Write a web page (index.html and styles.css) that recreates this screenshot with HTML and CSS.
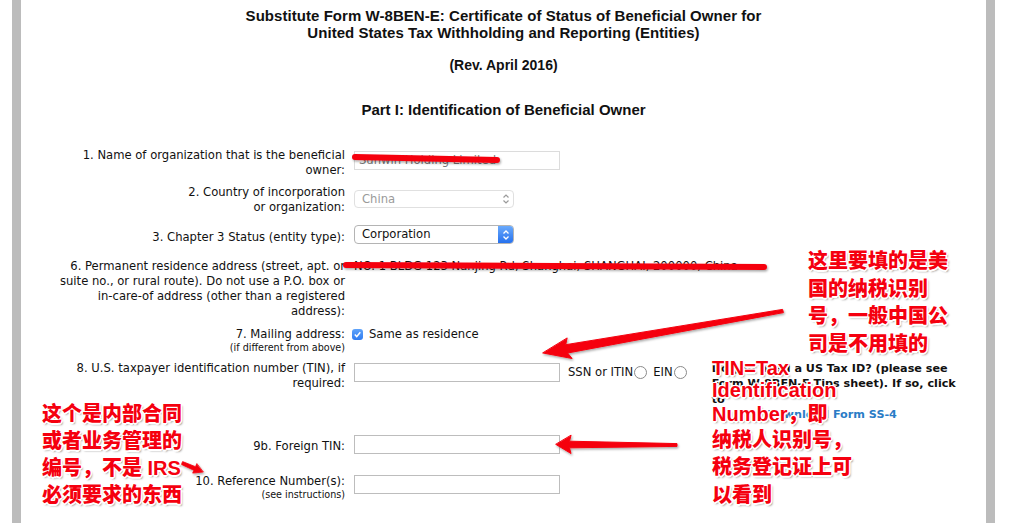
FILE: index.html
```html
<!DOCTYPE html>
<html lang="en">
<head>
<meta charset="utf-8">
<title>Substitute Form W-8BEN-E</title>
<link rel="stylesheet" href="styles.css">
</head>
<body>
<div class="page">
  <header class="form-head">
    <h1 class="title">Substitute Form W-8BEN-E: Certificate of Status of Beneficial Owner for<br>United States Tax Withholding and Reporting (Entities)</h1>
    <p class="rev">(Rev. April 2016)</p>
    <h2 class="part">Part I: Identification of Beneficial Owner</h2>
  </header>

  <div class="form">
    <div class="row r1">
      <div class="label">1. Name of organization that is the beneficial<br>owner:</div>
      <div class="field"><div class="input ro">Sunwin Holding Limited</div></div>
    </div>
    <div class="row r2">
      <div class="label">2. Country of incorporation<br>or organization:</div>
      <div class="field">
        <div class="select disabled"><span class="sel-text">China</span>
          <svg class="chev" width="8" height="12" viewBox="0 0 8 12"><path d="M1.5 4.5 L4 2 L6.5 4.5 M1.5 7.5 L4 10 L6.5 7.5" fill="none" stroke="#9a9a9a" stroke-width="1.2"/></svg>
        </div>
      </div>
    </div>
    <div class="row r3">
      <div class="label">3. Chapter 3 Status (entity type):</div>
      <div class="field">
        <div class="select active"><span class="sel-text">Corporation</span>
          <span class="sel-btn"><svg width="8" height="12" viewBox="0 0 8 12"><path d="M1.5 4.5 L4 2 L6.5 4.5 M1.5 7.5 L4 10 L6.5 7.5" fill="none" stroke="#fff" stroke-width="1.3"/></svg></span>
        </div>
      </div>
    </div>
    <div class="row r6">
      <div class="label">6. Permanent residence address (street, apt. or<br>suite no., or rural route). Do not use a P.O. box or<br>in-care-of address (other than a registered<br>address):</div>
      <div class="field"><span class="addr">NO. 1 BLDG 123 Nanjing Rd, Shanghai, SHANGHAI, 200000, China</span></div>
    </div>
    <div class="row r7">
      <div class="label">7. Mailing address:<span class="small">(if different from above)</span></div>
      <div class="field check-field">
        <span class="checkbox"><svg width="11" height="11" viewBox="0 0 11 11"><path d="M2.8 5.6 L4.7 7.6 L8.3 3.2" fill="none" stroke="#fff" stroke-width="1.5"/></svg></span>
        <span class="check-text">Same as residence</span>
      </div>
    </div>
    <div class="row r8">
      <div class="label">8. U.S. taxpayer identification number (TIN), if<br>required:</div>
      <div class="field tin-field">
        <div class="input"></div>
        <span class="opt">SSN or ITIN</span><span class="radio"></span>
        <span class="opt ein">EIN</span><span class="radio"></span>
        <div class="info">
          <p class="info-text">Do you need a US Tax ID? (please see<br>Form W-8BEN-E Tips sheet). If so, click<br>to</p>
          <a class="dl" href="#">Download Form SS-4</a>
        </div>
      </div>
    </div>
    <div class="row r9">
      <div class="label">9b. Foreign TIN:</div>
      <div class="field"><div class="input"></div></div>
    </div>
    <div class="row r10">
      <div class="label">10. Reference Number(s):<span class="small">(see instructions)</span></div>
      <div class="field"><div class="input"></div></div>
    </div>
  </div>
</div>

<svg class="marks" width="1013" height="523" viewBox="0 0 1013 523">
  <defs>
    <filter id="sh" x="-10%" y="-50%" width="120%" height="200%">
      <feDropShadow dx="1" dy="1.5" stdDeviation="1" flood-color="#000" flood-opacity="0.35"/>
    </filter>
  </defs>
  <g filter="url(#sh)" fill="#f5000f" stroke="#f5000f" stroke-linecap="round" stroke-linejoin="round">
    <path d="M355 157 L497 160" fill="none" stroke-width="6"/>
    <path d="M346 265 L764 267" fill="none" stroke-width="6"/>
    <polygon points="543,353 572.1,358.5 567.6,353.0 783.4,312.6 782.6,309.4 565.7,344.7 567.1,338.3" stroke-width="1"/>
    <polygon points="556,444.5 571,453.5 569.5,447.8 677,446.4 677,443.6 569.5,441.2 571,435.5" stroke-width="1"/>
    <polygon points="203,472 192.7,473.1 193.9,470.3 181.4,464.4 182.6,461.6 195.5,466.7 196.7,463.9" stroke-width="0.8"/>
  </g>
</svg>

<div class="note note-right">这里要填的是美<br>国的纳税识别<br>号，一般中国公<br>司是不用填的</div>
<div class="note note-mid">
  <div class="lat">TIN=Tax</div>
  <div class="lat">Identification</div>
  <div class="mix">Number，即</div>
  <div>纳税人识别号，</div>
  <div>税务登记证上可</div>
  <div>以看到</div>
</div>
<div class="note note-left">这个是内部合同<br>或者业务管理的<br>编号，不是 IRS<br>必须要求的东西</div>
</body>
</html>
```

FILE: styles.css
```css
html, body {
  margin: 0;
  padding: 0;
  background: #fff;
}
body {
  position: relative;
  width: 1013px;
  height: 523px;
  overflow: hidden;
  font-family: "DejaVu Sans", "Liberation Sans", sans-serif;
  color: #111;
}
.page {
  box-sizing: border-box;
  margin-left: 12px;
  width: 983px;
  height: 523px;
  border-left: 9px solid #bcbcbc;
  border-right: 9px solid #bcbcbc;
  background: #fff;
  padding-top: 7px;
}
.form-head {
  text-align: center;
}
.title {
  margin: 0;
  font-family: "Liberation Sans", sans-serif;
  font-weight: bold;
  font-size: 15px;
  line-height: 17px;
  letter-spacing: 0.05px;
}
.rev {
  margin: 15.5px 0 0;
  font-family: "Liberation Sans", sans-serif;
  font-weight: bold;
  font-size: 14px;
  line-height: 17px;
}
.part {
  margin: 27.5px 0 0;
  font-family: "Liberation Sans", sans-serif;
  font-weight: bold;
  font-size: 15px;
  line-height: 18px;
}
.form {
  margin-top: 28.5px;
}
.row {
  display: flex;
  align-items: flex-start;
  gap: 9px;
}
.label {
  width: 324px;
  flex: none;
  text-align: right;
  font-size: 11.6px;
  line-height: 15px;
  white-space: nowrap;
}
.small {
  display: block;
  font-size: 9.6px;
  line-height: 11px;
}
.field {
  font-size: 11.6px;
  line-height: 15px;
}
.input {
  box-sizing: border-box;
  width: 206px;
  height: 19px;
  border: 1px solid #bdbdbd;
  background: #fff;
  font-size: 11.6px;
  line-height: 17px;
  padding-left: 4px;
  color: #777;
}
.input.ro {
  border-color: #dcdcdc;
}
.select {
  box-sizing: border-box;
  position: relative;
  width: 160px;
  height: 19px;
  border-radius: 4px;
  display: flex;
  align-items: center;
}
.select.disabled {
  border: 1px solid #e0e0e0;
  color: #9a9a9a;
  height: 18px;
}
.select.active {
  border: 1px solid #b4b4b4;
  color: #111;
  overflow: hidden;
}
.sel-text {
  padding-left: 7px;
  flex: 1;
  font-size: 11.6px;
}
.chev {
  margin-right: 3px;
}
.sel-btn {
  width: 15px;
  align-self: stretch;
  background: linear-gradient(#6aaafc, #2671ee);
  display: flex;
  align-items: center;
  justify-content: center;
}
.r1 { margin-top: 0; }
.r1 .field { margin-top: 3.5px; }
.r2 { margin-top: 7px; }
.r2 .field { margin-top: 5.5px; }
.r3 { margin-top: 10.5px; }
.r3 .label { padding-top: 4.5px; }
.r6 { margin-top: 14px; }
.r7 { margin-top: 8px; }
.r8 { margin-top: 8px; }
.r9 { margin-top: 12.5px; }
.r9 .label { padding-top: 3.5px; }
.r10 { margin-top: 19.5px; }
.r10 .field { margin-top: 1.5px; }
.addr {
  white-space: nowrap;
}
.check-field {
  display: flex;
  align-items: center;
  margin-left: -2px;
}
.checkbox {
  width: 11px;
  height: 11px;
  border-radius: 3px;
  background: linear-gradient(#5ea3fa, #2f7cf1);
  display: inline-flex;
}
.check-text {
  margin-left: 6px;
}
.tin-field {
  display: flex;
  align-items: flex-start;
}
.tin-field .input {
  margin-top: 2.5px;
}
.opt {
  margin-left: 8px;
  margin-top: 2px;
  line-height: 19px;
}
.opt.ein {
  margin-left: 6px;
}
.radio {
  box-sizing: border-box;
  width: 13px;
  height: 13px;
  border: 1px solid #8a8a8a;
  border-radius: 50%;
  background: #fff;
  margin-top: 5.5px;
  margin-left: 1px;
}
.info {
  margin-left: 25px;
  font-weight: bold;
  font-size: 11.2px;
  line-height: 15.5px;
}
.info-text {
  margin: 0;
}
.dl {
  display: block;
  padding-left: 55px;
  color: #2a7cc6;
  text-decoration: none;
}
.marks {
  position: absolute;
  left: 0;
  top: 0;
  pointer-events: none;
}
.note {
  position: absolute;
  font-family: "Liberation Sans", "Noto Sans CJK SC", sans-serif;
  font-weight: 900;
  font-size: 20px;
  line-height: 27.5px;
  color: #f5000f;
  white-space: nowrap;
  text-shadow:
    -1px -1px 0 #fff, 1px -1px 0 #fff, -1px 1px 0 #fff, 1px 1px 0 #fff,
    0 -1.5px 0 #fff, 0 1.5px 0 #fff, -1.5px 0 0 #fff, 1.5px 0 0 #fff,
    1.5px 2px 2px rgba(0, 0, 0, 0.45);
}
.note-right {
  left: 808px;
  top: 248px;
  line-height: 27.7px;
}
.note-left {
  left: 42px;
  top: 400.5px;
  line-height: 27.3px;
}
.note-mid {
  left: 712px;
  top: 356.75px;
}
.note-mid .lat {
  line-height: 22.5px;
}
.note-mid .mix {
  line-height: 25px;
}
```
